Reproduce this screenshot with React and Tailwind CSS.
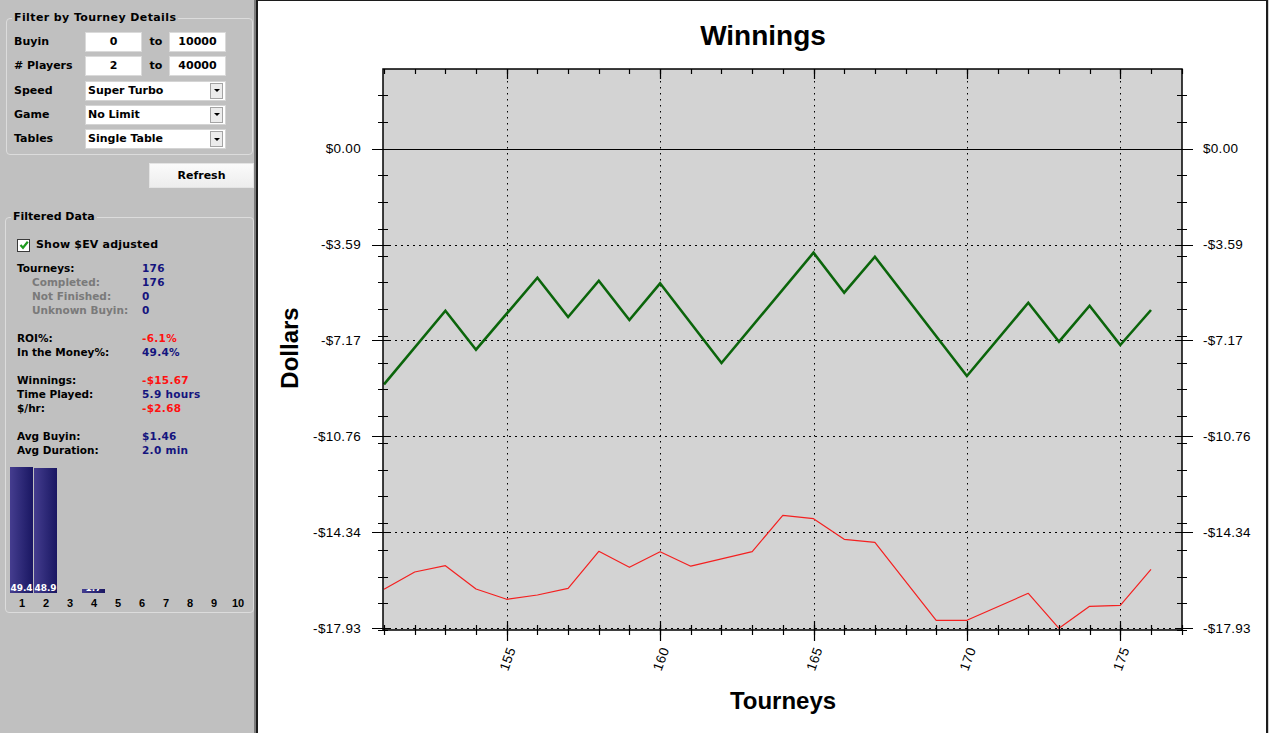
import React from "react";

const green = [[151,384.3],[153,310.7],[154,349.7],[156,277.7],[157,317],[158,280.7],[159,320],[160,283.3],[162,363],[165,252.7],[166,292.7],[167,256.7],[170,376],[172,302.7],[173,341.7],[174,305.7],[175,345],[176,310]];
const red = [[151,589.3],[152,572],[153,565.7],[154,589],[155,599.3],[156,595],[157,588.3],[158,551.3],[159,567.3],[160,551.7],[161,566.2],[163,551.7],[164,515.3],[165,518.7],[166,539.3],[167,542.3],[169,620.3],[170,620.3],[172,593.3],[173,628.3],[174,606.3],[175,605.3],[176,569.3]];

const X = (n) => 384 + (n - 151) * 30.68;
const Y = (v) => 148.5 - v * 26.75;
const cr = (v) => Math.round(v) + 0.5;

function Chart() {
  const majors = [0, -3.59, -7.17, -10.76, -14.34, -17.93];
  const labels = ["$0.00", "-$3.59", "-$7.17", "-$10.76", "-$14.34", "-$17.93"];
  const ints = [];
  for (let v = 2; v >= -18; v--) ints.push(v);
  const ns = [];
  for (let n = 151; n <= 177; n++) ns.push(n);
  const xMaj = [155, 160, 165, 170, 175];
  const pts = (arr) => arr.map(([n, y]) => `${X(n).toFixed(1)},${y}`).join(" ");
  return (
    <svg width="1008" height="732" className="block">
      <g transform="translate(-258,-1)" fontFamily="'Liberation Sans', Arial, sans-serif" fill="#000">
        <text x="763" y="45" textAnchor="middle" fontSize="28" fontWeight="bold">Winnings</text>
        <rect x="383" y="69" width="799" height="561" fill="#d3d3d3" />
        {xMaj.map((n) => (
          <line key={"vg" + n} x1={cr(X(n))} x2={cr(X(n))} y1={69} y2={630} stroke="#000" strokeWidth="1" strokeDasharray="1.5 4.5" />
        ))}
        {majors.slice(1).map((v) => (
          <line key={"hg" + v} x1={383} x2={1182} y1={cr(Y(v))} y2={cr(Y(v))} stroke="#000" strokeWidth="1" strokeDasharray="2 4" />
        ))}
        <line x1={383} x2={1182} y1={cr(Y(0))} y2={cr(Y(0))} stroke="#000" strokeWidth="1" />
        <polyline points={pts(red)} fill="none" stroke="#f42020" strokeWidth="1.2" strokeLinejoin="round" />
        <polyline points={pts(green)} fill="none" stroke="#0b650b" strokeWidth="2.6" strokeLinejoin="miter" />
        <rect x="383" y="69" width="799" height="561" fill="none" stroke="#000" strokeWidth="1.5" />
        {ints.map((v) => (
          <g key={"it" + v}>
            <line x1={378} x2={388} y1={cr(Y(v))} y2={cr(Y(v))} stroke="#000" strokeWidth="1" />
            <line x1={1177} x2={1187} y1={cr(Y(v))} y2={cr(Y(v))} stroke="#000" strokeWidth="1" />
          </g>
        ))}
        {majors.map((v) => (
          <g key={"mt" + v}>
            <line x1={372} x2={389} y1={cr(Y(v))} y2={cr(Y(v))} stroke="#000" strokeWidth="1" />
            <line x1={1177} x2={1193} y1={cr(Y(v))} y2={cr(Y(v))} stroke="#000" strokeWidth="1" />
          </g>
        ))}
        {ns.map((n) => (
          <g key={"nt" + n}>
            <line x1={cr(X(n))} x2={cr(X(n))} y1={69} y2={74} stroke="#000" strokeWidth="1.2" />
            <line x1={cr(X(n))} x2={cr(X(n))} y1={625} y2={635} stroke="#000" strokeWidth="1.2" />
          </g>
        ))}
        {xMaj.map((n) => (
          <g key={"xm" + n}>
            <line x1={cr(X(n))} x2={cr(X(n))} y1={69} y2={79} stroke="#000" strokeWidth="1.2" />
            <line x1={cr(X(n))} x2={cr(X(n))} y1={621} y2={641} stroke="#000" strokeWidth="1.2" />
            <text
              transform={`translate(${X(n) + 1},659) rotate(-70)`}
              textAnchor="middle"
              dominantBaseline="central"
              fontSize="13.5"
              letterSpacing="0.4"
            >
              {n}
            </text>
          </g>
        ))}
        {majors.map((v, i) => (
          <g key={"lb" + v}>
            <text x="361" y={Y(v) + 4.5} textAnchor="end" fontSize="13.5" letterSpacing="0.3">{labels[i]}</text>
            <text x="1203" y={Y(v) + 4.5} textAnchor="start" fontSize="13.5" letterSpacing="0.3">{labels[i]}</text>
          </g>
        ))}
        <text transform="translate(298,348) rotate(-90)" textAnchor="middle" fontSize="24" fontWeight="bold">Dollars</text>
        <text x="783" y="709" textAnchor="middle" fontSize="24" fontWeight="bold">Tourneys</text>
      </g>
    </svg>
  );
}

function NumBox({ v }) {
  return (
    <div className="flex h-[20px] w-[57px] items-center justify-center border border-[#dadada] bg-white">{v}</div>
  );
}

function Select({ v }) {
  return (
    <div className="flex h-[20px] w-[141px] items-center justify-between border border-[#d4d4d4] bg-white pl-[2px] pr-[2px]">
      <span>{v}</span>
      <div className="flex h-[16px] w-[13px] items-center justify-center border border-[#a4a4a4] bg-[#ececec]">
        <div className="h-0 w-0 border-x-[3px] border-t-[3px] border-x-transparent border-t-black" />
      </div>
    </div>
  );
}

function Row({ label, children }) {
  return (
    <div className="flex h-[20px] items-center">
      <div className="w-[71px]">{label}</div>
      {children}
    </div>
  );
}

const stats = [
  ["Tourneys:", "176", "b", false],
  ["Completed:", "176", "b", true],
  ["Not Finished:", "0", "b", true],
  ["Unknown Buyin:", "0", "b", true],
  null,
  ["ROI%:", "-6.1%", "r"],
  ["In the Money%:", "49.4%", "b"],
  null,
  ["Winnings:", "-$15.67", "r"],
  ["Time Played:", "5.9 hours", "b"],
  ["$/hr:", "-$2.68", "r"],
  null,
  ["Avg Buyin:", "$1.46", "b"],
  ["Avg Duration:", "2.0 min", "b"],
];

const bars = [49.4, 48.9, 0, 1.7, 0, 0, 0, 0, 0, 0];

function LeftPanel() {
  return (
    <div className="flex w-[254px] shrink-0 flex-col bg-[#c0c0c0] font-['DejaVu_Sans',Verdana,sans-serif] text-[11px] font-bold leading-[14px] text-black">
      <fieldset className="ml-[6px] mt-[11px] w-[247px] rounded-[4px] border border-[#dcdcdc] pb-[5px] pl-[7px] pt-[7px]">
        <legend className="-ml-[2px] px-[2px] tracking-[0.4px]">Filter by Tourney Details</legend>
        <div className="flex flex-col gap-[4.25px]">
          <Row label="Buyin">
            <NumBox v="0" />
            <div className="w-[27px] pl-[1px] text-center">to</div>
            <NumBox v="10000" />
          </Row>
          <Row label="# Players">
            <NumBox v="2" />
            <div className="w-[27px] pl-[1px] text-center">to</div>
            <NumBox v="40000" />
          </Row>
          <Row label="Speed">
            <Select v="Super Turbo" />
          </Row>
          <Row label="Game">
            <Select v="No Limit" />
          </Row>
          <Row label="Tables">
            <Select v="Single Table" />
          </Row>
        </div>
      </fieldset>
      <div className="mt-[8px] flex justify-end">
        <div className="flex h-[25px] w-[105px] items-center justify-center border border-[#e4e4e4] bg-linear-to-b from-[#fbfbfb] to-[#ededed]">
          Refresh
        </div>
      </div>
      <fieldset className="ml-[5px] mt-[22px] w-[249px] rounded-[4px] border border-[#dcdcdc] pb-[2px] pl-[11px] pt-[14px]">
        <legend className="-ml-[6px] px-[2px]">Filtered Data</legend>
        <div className="flex h-[14px] items-center gap-[6px]">
          <div className="flex h-[13px] w-[13px] items-center justify-center border border-[#3a3a3a] bg-white">
            <svg width="10" height="10" viewBox="0 0 10 10">
              <path d="M1.5 5 L4 7.8 L8.8 1.8" stroke="#1f9a1f" strokeWidth="2.2" fill="none" />
            </svg>
          </div>
          <span className="tracking-[0.2px]">Show $EV adjusted</span>
        </div>
        <div className="mt-[9px] flex flex-col text-[10.5px]">
          {stats.map((s, i) =>
            s ? (
              <div key={i} className="flex h-[14px] items-center">
                <div className={s[3] ? "w-[125px] pl-[15px] text-[#7a7a7a]" : "w-[125px]"}>{s[0]}</div>
                <div className={s[2] === "r" ? "text-[#ff1010] tracking-[0.3px]" : "text-[#14147e] tracking-[0.3px]"}>{s[1]}</div>
              </div>
            ) : (
              <div key={i} className="h-[14px]" />
            )
          )}
        </div>
        <div className="-ml-[7px] mt-[8px] flex h-[128px] items-end">
          {bars.map((b, i) => (
            <div key={i} className="flex w-[24px] items-end">
              {b > 0 ? (
                <div
                  className="flex w-[23px] items-end justify-center overflow-hidden bg-linear-to-r from-[#453d8f] to-[#1a1662]"
                  style={{ height: Math.round(b * 2.55) + "px" }}
                >
                  <span className="text-[9px] leading-[9px] text-white">{b.toFixed(1)}</span>
                </div>
              ) : null}
            </div>
          ))}
        </div>
        <div className="-ml-[7px] mt-[3px] flex font-['Liberation_Sans',Arial,sans-serif] text-[11px]">
          {bars.map((b, i) => (
            <div key={i} className="w-[24px] text-center">{i + 1}</div>
          ))}
        </div>
      </fieldset>
    </div>
  );
}

export default function App() {
  return (
    <div className="flex h-[733px] w-[1269px] overflow-hidden bg-[#d0d0d0]">
      <LeftPanel />
      <div className="w-[2px] shrink-0 bg-[#7c7c7c]" />
      <div className="w-[1012px] shrink-0 border-l-2 border-r-2 border-t border-[#1c1c1c] bg-white">
        <Chart />
      </div>
    </div>
  );
}
